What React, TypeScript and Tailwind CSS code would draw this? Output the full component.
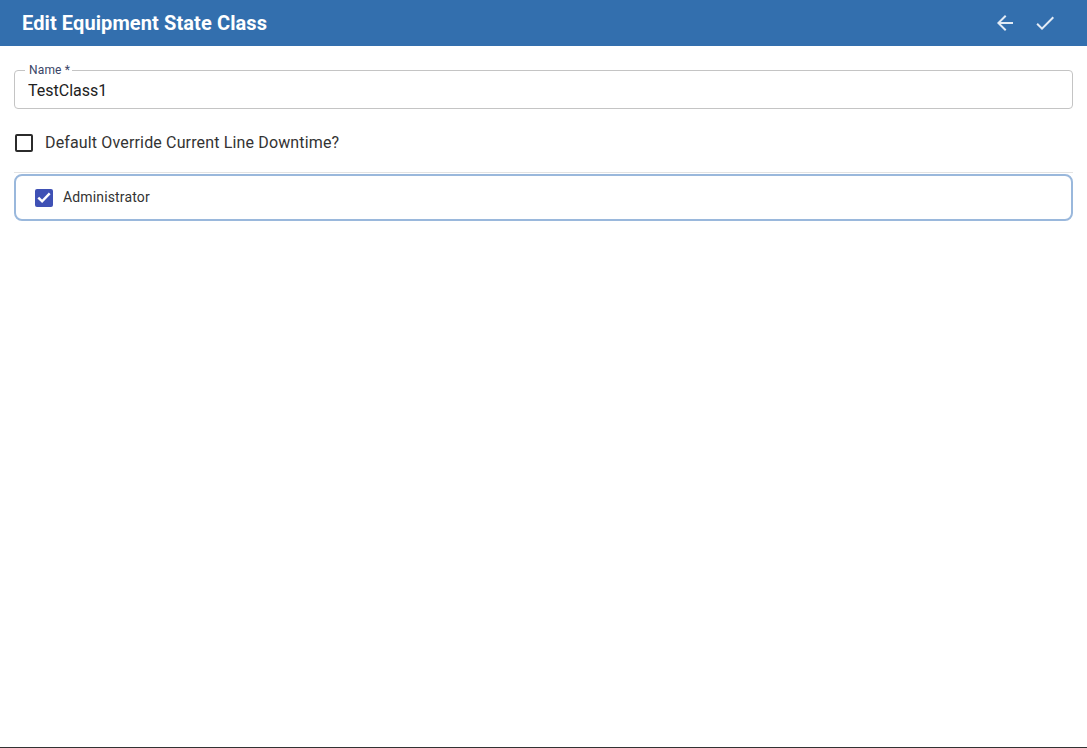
import { useState } from 'react';

export default function App() {
  const [name, setName] = useState('TestClass1');
  const [override, setOverride] = useState(false);
  const [admin, setAdmin] = useState(true);

  return (
    <div className="relative h-[748px] w-full bg-white font-['Roboto',sans-serif] text-[#212121]">
      {/* Header */}
      <div className="flex h-[46px] items-center justify-between bg-[#336fae] pl-[22px] pr-[30px]">
        <h1 className="text-[20px] font-bold tracking-[0.1px] text-white">Edit Equipment State Class</h1>
        <div className="flex items-center gap-[16px]">
          <button className="text-[#e3ebf5]" aria-label="Back">
            <svg width="24" height="24" viewBox="0 0 24 24" fill="currentColor">
              <path d="M20 11H7.83l5.59-5.59L12 4l-8 8 8 8 1.41-1.41L7.83 13H20v-2z" />
            </svg>
          </button>
          <button className="text-[#e3ebf5]" aria-label="Save">
            <svg width="24" height="24" viewBox="0 0 24 24" fill="currentColor">
              <path d="M9 16.17 4.83 12l-1.42 1.41L9 19 21 7l-1.41-1.41z" />
            </svg>
          </button>
        </div>
      </div>

      <div className="px-[14px] pt-[18px]">
        {/* Name field */}
        <fieldset className="h-[45px] rounded-[4px] border border-[#c4c4c4] pl-[10px] pr-[9px]">
          <legend className="pl-[4px] pr-[2px] text-[12px] leading-[12px] tracking-[0.15px] text-[#3a4566]">Name *</legend>
          <input
            value={name}
            onChange={(e) => setName(e.target.value)}
            className="w-full bg-transparent px-[3px] pt-[5px] text-[16px] leading-[20px] text-[#212121] outline-none"
          />
        </fieldset>

        {/* Override checkbox */}
        <label className="mt-[22px] flex cursor-pointer items-center">
          <span
            onClick={() => setOverride(!override)}
            className="ml-[1px] flex h-[18px] w-[18px] items-center justify-center rounded-[2px] border-2 border-[#2b2b2b]"
          >
            {override && (
              <svg width="14" height="14" viewBox="0 0 24 24" fill="#2b2b2b">
                <path d="M9 16.17 4.83 12l-1.42 1.41L9 19 21 7l-1.41-1.41z" />
              </svg>
            )}
          </span>
          <span className="ml-[12px] text-[16px] tracking-[0.15px] text-[#333]">Default Override Current Line Downtime?</span>
        </label>

        <div className="mt-[17px] h-px bg-[#e3e3e3]" />

        {/* Roles box */}
        <div className="mt-px flex h-[47px] items-center rounded-[8px] border-2 border-[#9ab8dc] pl-[19px]">
          <span
            onClick={() => setAdmin(!admin)}
            className={`flex h-[18px] w-[18px] cursor-pointer items-center justify-center rounded-[2px] ${
              admin ? 'bg-[#3f51b5]' : 'border-2 border-[#555]'
            }`}
          >
            {admin && (
              <svg width="18" height="18" viewBox="0 0 24 24" fill="none" stroke="white" strokeWidth="3.2" strokeLinecap="square">
                <path d="M5.5 12.5l4 4 9-9.5" />
              </svg>
            )}
          </span>
          <span className="ml-[10px] text-[14px] tracking-[0.15px] text-[#333]">Administrator</span>
        </div>
      </div>

      <div className="absolute bottom-0 left-0 h-px w-full bg-[#333]" />
    </div>
  );
}
